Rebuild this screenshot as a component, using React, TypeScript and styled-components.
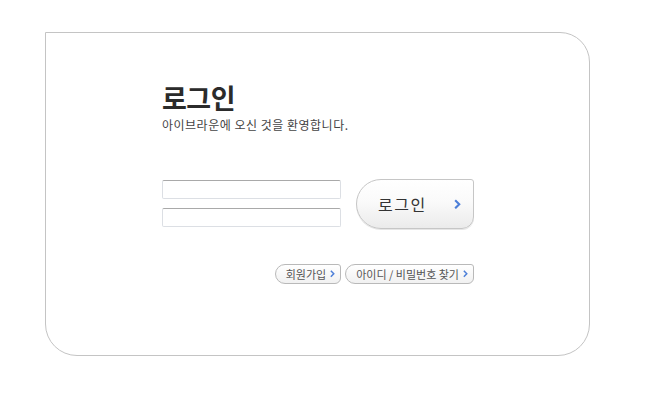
import styled, { createGlobalStyle } from "styled-components";

const GlobalStyle = createGlobalStyle`
  html, body {
    margin: 0;
    padding: 0;
    background: #ffffff;
  }
  body {
    font-family: "Noto Sans CJK KR", "Noto Sans", sans-serif;
    color: #333;
  }
`;

const Chevron = ({ size = 6 }: { size?: number }) => (
  <svg width={size} height={size * 1.5} viewBox="0 0 6 9" aria-hidden>
    <path d="M1 1 L4.5 4.5 L1 8" fill="none" stroke="#4d7fd8" strokeWidth="1.8" />
  </svg>
);

const App = () => {
  return (
    <>
      <GlobalStyle />
      <Page>
        <Card>
          <Title>로그인</Title>
          <Welcome>아이브라운에 오신 것을 환영합니다.</Welcome>

          <Form>
            <Fields>
              <Input type="text" />
              <Input type="password" />
            </Fields>
            <LoginButton type="button">
              <span>로그인</span>
              <Chevron size={7} />
            </LoginButton>
          </Form>

          <Links>
            <SmallButton>
              회원가입 <Chevron size={5} />
            </SmallButton>
            <SmallButton>
              아이디 / 비밀번호 찾기 <Chevron size={5} />
            </SmallButton>
          </Links>
        </Card>
      </Page>
    </>
  );
};

export default App;

const Page = styled.div`
  padding: 32px 0 0 45px;
`;

const Card = styled.div`
  box-sizing: border-box;
  width: 545px;
  height: 324px;
  border: 1px solid #c4c4c4;
  border-radius: 0 30px 32px 32px;
  padding: 48px 0 0 116px;
`;

const Title = styled.h1`
  margin: 0;
  font-size: 27px;
  font-weight: 700;
  line-height: 34px;
  color: #2b2b2b;
  letter-spacing: -0.5px;
`;

const Welcome = styled.p`
  margin: 2px 0 0;
  font-size: 12px;
  line-height: 16px;
  color: #444;
  letter-spacing: 0.5px;
`;

const Form = styled.div`
  display: flex;
  align-items: flex-start;
  gap: 15px;
  margin-top: 46px;
`;

const Fields = styled.div`
  display: flex;
  flex-direction: column;
  gap: 9px;
  padding-top: 1px;
`;

const Input = styled.input`
  box-sizing: border-box;
  width: 179px;
  height: 19px;
  margin: 0;
  padding: 0 4px;
  border: 1px solid #dcdfe4;
  border-top-color: #a9a9a9;
  border-radius: 2px;
  background: #fff;
  outline: none;
`;

const LoginButton = styled.button`
  box-sizing: border-box;
  width: 118px;
  height: 50px;
  display: flex;
  align-items: center;
  justify-content: space-between;
  padding: 0 12px 0 21px;
  border: 1px solid #c6c6c6;
  border-radius: 25px 3px 12px 25px;
  background: linear-gradient(#ffffff 0%, #fafafa 45%, #ebebeb 100%);
  box-shadow: 0 1px 0 #e6e6e6;
  font-family: "Noto Sans CJK KR", sans-serif;
  font-size: 16px;
  color: #333;
  cursor: pointer;

  span {
    letter-spacing: 1.5px;
  }
`;

const Links = styled.div`
  display: flex;
  justify-content: flex-end;
  gap: 4px;
  width: 312px;
  margin-top: 35px;
`;

const SmallButton = styled.button`
  box-sizing: border-box;
  height: 20px;
  display: flex;
  align-items: center;
  gap: 4px;
  padding: 0 5px 0 10px;
  border: 1px solid #b9b9b9;
  border-radius: 10px 3px 6px 10px;
  background: linear-gradient(#ffffff, #f1f1f1);
  font-family: "Noto Sans CJK KR", sans-serif;
  font-size: 11px;
  color: #555;
  letter-spacing: 0;
  cursor: pointer;
`;
